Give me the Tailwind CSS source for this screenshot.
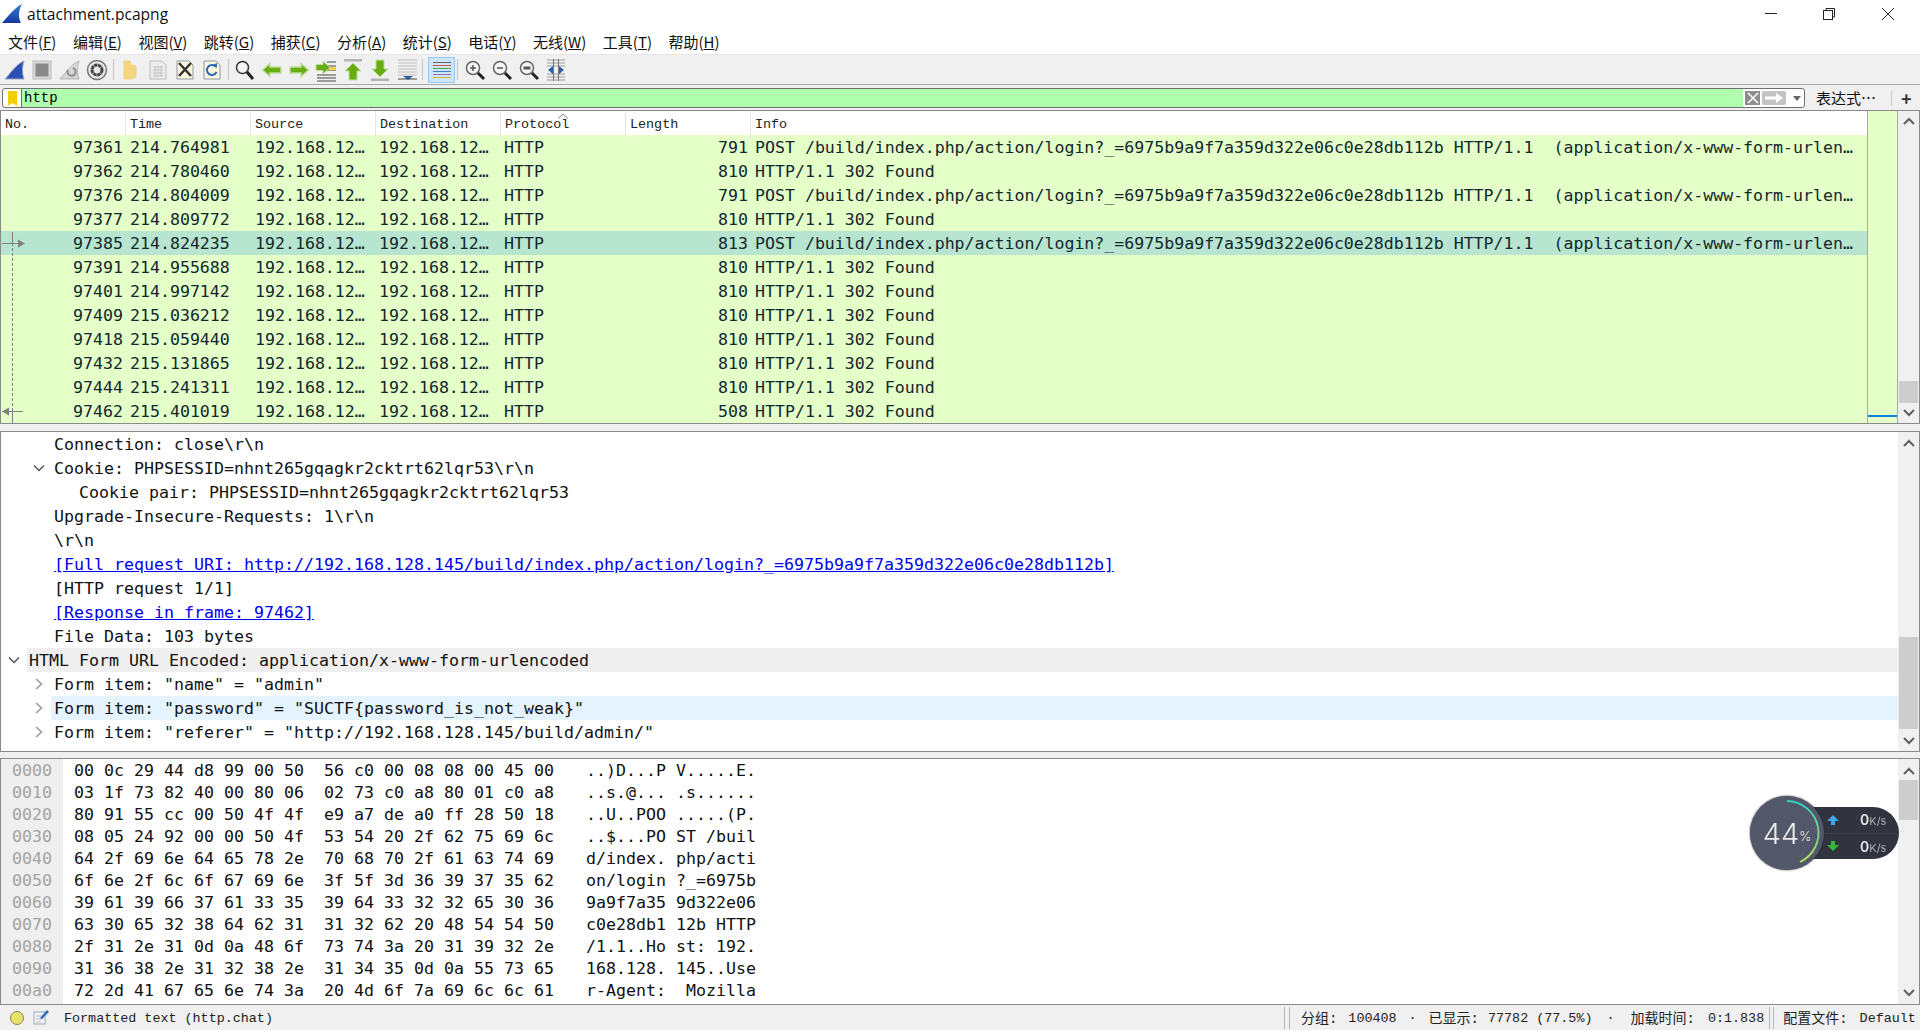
<!doctype html>
<html lang="zh-CN">
<head>
<meta charset="utf-8">
<title>attachment.pcapng</title>
<script src="https://cdn.jsdelivr.net/npm/@tailwindcss/browser@4"></script>
</head>
<body class="relative w-[1920px] h-[1030px] overflow-hidden bg-[#f0f0f0] text-black font-['Noto_Sans_CJK_SC',sans-serif]">

<!-- title bar -->
<header class="h-[28px] bg-white flex items-center relative">
  <svg class="ml-[2px] w-[21px] h-[23px] -mt-[2px]" viewBox="0 0 20 20"><defs><linearGradient id="fin" x1="0" y1="0" x2="0" y2="1"><stop offset="0" stop-color="#2f7fd8"/><stop offset="1" stop-color="#17389e"/></linearGradient></defs><path d="M0 19C5 14 10 6 19 1C16 7 15 13 18 19Z" fill="url(#fin)"/></svg>
  <span class="ml-[4px] mt-[2px] text-[15.600px] font-['Open_Sans',sans-serif] text-[#111]">attachment.pcapng</span>
  <div class="ml-auto flex items-center">
    <svg class="w-[14px] h-[14px] mr-[44px]" viewBox="0 0 14 14"><path d="M1 6.500H13" stroke="#222"/></svg>
    <svg class="w-[14px] h-[14px] mr-[45px]" viewBox="0 0 14 14" fill="none" stroke="#222"><rect x="1.500" y="3.500" width="9" height="9"/><path d="M4 3V1.500H12.500V10H10.500"/></svg>
    <svg class="w-[14px] h-[14px] mr-[25px]" viewBox="0 0 14 14" stroke="#222"><path d="M1 1L13 13M13 1L1 13"/></svg>
  </div>
</header>

<!-- menu -->
<nav class="h-[27px] bg-white border-b border-[#e6e6e6] flex items-center pl-[8px] pt-[2px] gap-[16.500px] text-[15px] text-[#111]">
  <span>文件(<u>F</u>)</span><span>编辑(<u>E</u>)</span><span>视图(<u>V</u>)</span><span>跳转(<u>G</u>)</span><span>捕获(<u>C</u>)</span><span>分析(<u>A</u>)</span><span>统计(<u>S</u>)</span><span>电话(<u>Y</u>)</span><span>无线(<u>W</u>)</span><span>工具(<u>T</u>)</span><span>帮助(<u>H</u>)</span>
</nav>

<!-- toolbar -->
<div class="h-[30px] border-b border-[#a9a9a9] flex items-center pl-[1px]">
  <div class="w-[27px] flex justify-center"><svg class="w-[22px] h-[22px]" viewBox="0 0 22 22"><path d="M1 20C6 15 11 6 20 2C18 8 18 14 20 20Z" fill="#2c4fb4" stroke="#9aa6c4"/></svg></div>
  <div class="w-[28px] flex justify-center"><svg class="w-[22px] h-[22px]" viewBox="0 0 22 22"><rect x="2" y="2" width="18" height="18" fill="#d8d8d8" stroke="#bdbdbd"/><rect x="4.500" y="4.500" width="13" height="13" fill="#8a8a8a"/></svg></div>
  <div class="w-[27px] flex justify-center"><svg class="w-[22px] h-[22px]" viewBox="0 0 22 22"><path d="M1 20C6 15 11 6 20 2C18 8 18 14 20 20Z" fill="#d6d6d6" stroke="#b5b5b5"/><path d="M14 9A4 4 0 1 1 9 11" fill="none" stroke="#8f8f8f" stroke-width="2"/></svg></div>
  <div class="w-[27px] flex justify-center"><svg class="w-[22px] h-[22px]" viewBox="0 0 22 22"><circle cx="11" cy="11" r="9.500" fill="#e8e8e8" stroke="#777" stroke-width="1.500"/><circle cx="11" cy="11" r="5" fill="none" stroke="#444" stroke-width="3" stroke-dasharray="3.500 0.500"/></svg></div>
  <div class="w-[1px] h-[21px] bg-[#c4c4c4] ml-[3px] mr-[2px]"></div>
  <div class="w-[28px] flex justify-center"><svg class="w-[20px] h-[22px]" viewBox="0 0 20 22"><path d="M4 2H10L11 6L16 7V18L11 20H4Z" fill="#f5d67c" stroke="#ecd48a"/></svg></div>
  <div class="w-[27px] flex justify-center"><svg class="w-[22px] h-[22px]" viewBox="0 0 22 22"><path d="M3 2H15L19 6V20H3Z" fill="#ececec" stroke="#bcbcbc"/><path d="M6 8H16M6 11H16M6 14H16M6 17H16M8 7V18M11 7V18M14 7V18" stroke="#c6c6c6"/></svg></div>
  <div class="w-[27px] flex justify-center"><svg class="w-[22px] h-[22px]" viewBox="0 0 22 22"><path d="M3 2H15L19 6V20H3Z" fill="#fbf6dc" stroke="#8c9aa4"/><path d="M5 4L17 17M17 4L5 17" stroke="#333" stroke-width="2.500"/></svg></div>
  <div class="w-[27px] flex justify-center"><svg class="w-[22px] h-[22px]" viewBox="0 0 22 22"><path d="M3 2H15L19 6V20H3Z" fill="#fbf6dc" stroke="#8c9aa4"/><path d="M15 8A5 5 0 1 0 15.500 13" fill="none" stroke="#2a68b8" stroke-width="2"/><path d="M12 6L16 4V9Z" fill="#2a68b8"/></svg></div>
  <div class="w-[1px] h-[21px] bg-[#c4c4c4] ml-[3px] mr-[2px]"></div>
  <div class="w-[27px] flex justify-center"><svg class="w-[22px] h-[22px]" viewBox="0 0 22 22"><circle cx="8.500" cy="8.500" r="6" fill="#f4f4f4" stroke="#333" stroke-width="1.500"/><path d="M13 13L19 20" stroke="#222" stroke-width="3"/></svg></div>
  <div class="w-[27px] flex justify-center"><svg class="w-[22px] h-[20px]" viewBox="0 0 22 20"><path d="M1.500 10L9 3.500V7H20V13H9V16.500Z" fill="#68ad12" stroke="#c2dda0" stroke-width="1.500"/></svg></div>
  <div class="w-[27px] flex justify-center"><svg class="w-[22px] h-[20px]" viewBox="0 0 22 20"><path d="M20.500 10L13 3.500V7H2V13H13V16.500Z" fill="#68ad12" stroke="#c2dda0" stroke-width="1.500"/></svg></div>
  <div class="w-[27px] flex justify-center"><svg class="w-[22px] h-[24px]" viewBox="0 0 22 24"><path d="M12 4H21M12 8H21M12 12H21M2 17H21M2 20H21M2 23H21" stroke="#444"/><path d="M14 9H21V12H14Z" fill="#f2cf4a"/><path d="M15 9.500L8 3V6.500H1V12.500H8V16Z" fill="#68ad12" stroke="#c2dda0"/></svg></div>
  <div class="w-[27px] flex justify-center"><svg class="w-[22px] h-[24px]" viewBox="0 0 22 24"><rect x="2" y="1" width="18" height="2.500" fill="#b4b4b4"/><path d="M11 5L19 13H15V22H7V13H3Z" fill="#68ad12" stroke="#c2dda0"/></svg></div>
  <div class="w-[27px] flex justify-center"><svg class="w-[22px] h-[24px]" viewBox="0 0 22 24"><rect x="2" y="20.500" width="18" height="2.500" fill="#b4b4b4"/><path d="M11 19L19 11H15V2H7V11H3Z" fill="#68ad12" stroke="#c2dda0"/></svg></div>
  <div class="w-[27px] flex justify-center"><svg class="w-[22px] h-[24px]" viewBox="0 0 22 24"><path d="M2 2H21M2 5H21M2 8H21M2 11H21M2 14H21M2 17H21" stroke="#bcbcbc"/><path d="M2 21H21" stroke="#444"/><path d="M7 18H17L12 22Z" fill="#2a5fa8"/></svg></div>
  <div class="w-[1px] h-[21px] bg-[#c4c4c4] ml-[2px] mr-[5px]"></div>
  <div class="w-[27px] h-[26px] flex justify-center items-center bg-[#cce4f7] border border-[#99c9ef]"><svg class="w-[20px] h-[20px]" viewBox="0 0 20 20"><path d="M1 2.500H19" stroke="#666"/><path d="M1 5.500H19" stroke="#d9534f"/><path d="M1 8.500H19" stroke="#4ca64c"/><path d="M1 11.500H19" stroke="#3f7fd0"/><path d="M1 14.500H19" stroke="#a070c0"/><path d="M1 17.500H19" stroke="#d8b02a"/></svg></div>
  <div class="w-[1px] h-[21px] bg-[#c4c4c4] ml-[2px] mr-[3px]"></div>
  <div class="w-[27px] flex justify-center"><svg class="w-[22px] h-[22px]" viewBox="0 0 22 22"><circle cx="9" cy="9" r="6.500" fill="#f4f4f4" stroke="#666" stroke-width="1.500"/><path d="M14 14L20 20" stroke="#222" stroke-width="3"/><path d="M6 9H12M9 6V12" stroke="#555" stroke-width="1.500"/></svg></div>
  <div class="w-[27px] flex justify-center"><svg class="w-[22px] h-[22px]" viewBox="0 0 22 22"><circle cx="9" cy="9" r="6.500" fill="#f4f4f4" stroke="#666" stroke-width="1.500"/><path d="M14 14L20 20" stroke="#222" stroke-width="3"/><path d="M6 9H12" stroke="#555" stroke-width="1.500"/></svg></div>
  <div class="w-[27px] flex justify-center"><svg class="w-[22px] h-[22px]" viewBox="0 0 22 22"><circle cx="9" cy="9" r="6.500" fill="#f4f4f4" stroke="#666" stroke-width="1.500"/><path d="M14 14L20 20" stroke="#222" stroke-width="3"/><path d="M5.500 9H12.500" stroke="#555" stroke-width="3"/></svg></div>
  <div class="w-[27px] flex justify-center"><svg class="w-[22px] h-[24px]" viewBox="0 0 22 24"><path d="M2 2H20M2 5H20M2 8H20M2 16H20M2 19H20M2 22H20" stroke="#9a9a9a"/><path d="M8.500 1V23M13.500 1V23" stroke="#777"/><path d="M3 12L8 8V16ZM19 12L14 8V16Z" fill="#2a5fa8"/></svg></div>
</div>

<!-- display filter -->
<div class="h-[25px] flex items-center pl-[2px] pt-[1px]">
  <div class="w-[1803px] h-[20px] border border-[#707070] rounded-[3px] flex items-center bg-white overflow-hidden">
    <div class="w-[19px] h-full border-r border-[#707070] flex justify-center items-center"><svg class="w-[9px] h-[15px]" viewBox="0 0 9 15"><path d="M0 0H9V15L4.500 12L0 15Z" fill="#f2d000"/></svg></div>
    <div class="w-[1721px] h-full bg-[#afffaf] pl-[2px] flex items-center font-['Liberation_Mono',monospace] text-[14px] leading-none">http</div>
    <div class="w-[15px] h-[14px] ml-[2px] bg-[#8e8e8e] flex items-center justify-center"><svg class="w-[12px] h-[12px]" viewBox="0 0 12 12"><path d="M1 1L11 11M11 1L1 11" stroke="#fff" stroke-width="1.500"/></svg></div>
    <div class="w-[24px] h-[14px] ml-[2px] bg-[#c4c4c4] rounded-[2px] flex items-center justify-center"><svg class="w-[18px] h-[10px]" viewBox="0 0 18 10"><path d="M0 3.500H11V0L18 5L11 10V6.500H0Z" fill="#fff"/></svg></div>
    <svg class="w-[8px] h-[5px] ml-[7px]" viewBox="0 0 8 5"><path d="M0 0H8L4 5Z" fill="#666"/></svg>
  </div>
  <span class="ml-[11px] w-[75px] text-[15px] text-[#111] whitespace-nowrap">表达式…</span>
  <div class="w-[1px] h-[15px] bg-[#c8c8c8]"></div>
  <span class="ml-[9px] text-[18px] font-bold text-[#333] leading-none">+</span>
</div>

<!-- packet list -->
<section class="relative h-[314px] border border-[#8a8a8a] bg-white flex font-['DejaVu_Sans_Mono',monospace] text-[16.580px] leading-[26px] text-[#12272e] [&_span]:whitespace-pre">
  <div class="w-[1866px] overflow-hidden">
    <div class="h-[24px] grid grid-cols-[125px_125px_125px_125px_125px_125px_1fr] font-['Liberation_Mono',monospace] text-[13.400px] leading-[28px] text-[#222]">
      <div class="border-r border-[#e4e4e4] pl-[4px]">No.</div>
      <div class="border-r border-[#e4e4e4] pl-[4px]">Time</div>
      <div class="border-r border-[#e4e4e4] pl-[4px]">Source</div>
      <div class="border-r border-[#e4e4e4] pl-[4px]">Destination</div>
      <div class="border-r border-[#e4e4e4] pl-[4px]">Protocol</div>
      <div class="border-r border-[#e4e4e4] pl-[4px]">Length</div>
      <div class="pl-[4px]">Info</div>
    </div>
    <div>
      <div class="h-[24px] bg-[#e4ffc7] grid grid-cols-[125px_125px_125px_125px_125px_125px_1fr]"><span class="text-right pr-[3px]">97361</span><span class="pl-[4px]">214.764981</span><span class="pl-[4px]">192.168.12…</span><span class="pl-[3px]">192.168.12…</span><span class="pl-[3px]">HTTP</span><span class="text-right pr-[3px]">791</span><span class="pl-[4px]">POST /build/index.php/action/login?_=6975b9a9f7a359d322e06c0e28db112b HTTP/1.1  (application/x-www-form-urlen…</span></div>
      <div class="h-[24px] bg-[#e4ffc7] grid grid-cols-[125px_125px_125px_125px_125px_125px_1fr]"><span class="text-right pr-[3px]">97362</span><span class="pl-[4px]">214.780460</span><span class="pl-[4px]">192.168.12…</span><span class="pl-[3px]">192.168.12…</span><span class="pl-[3px]">HTTP</span><span class="text-right pr-[3px]">810</span><span class="pl-[4px]">HTTP/1.1 302 Found</span></div>
      <div class="h-[24px] bg-[#e4ffc7] grid grid-cols-[125px_125px_125px_125px_125px_125px_1fr]"><span class="text-right pr-[3px]">97376</span><span class="pl-[4px]">214.804009</span><span class="pl-[4px]">192.168.12…</span><span class="pl-[3px]">192.168.12…</span><span class="pl-[3px]">HTTP</span><span class="text-right pr-[3px]">791</span><span class="pl-[4px]">POST /build/index.php/action/login?_=6975b9a9f7a359d322e06c0e28db112b HTTP/1.1  (application/x-www-form-urlen…</span></div>
      <div class="h-[24px] bg-[#e4ffc7] grid grid-cols-[125px_125px_125px_125px_125px_125px_1fr]"><span class="text-right pr-[3px]">97377</span><span class="pl-[4px]">214.809772</span><span class="pl-[4px]">192.168.12…</span><span class="pl-[3px]">192.168.12…</span><span class="pl-[3px]">HTTP</span><span class="text-right pr-[3px]">810</span><span class="pl-[4px]">HTTP/1.1 302 Found</span></div>
      <div class="h-[24px] bg-[#b7e5d0] grid grid-cols-[125px_125px_125px_125px_125px_125px_1fr]"><span class="text-right pr-[3px]">97385</span><span class="pl-[4px]">214.824235</span><span class="pl-[4px]">192.168.12…</span><span class="pl-[3px]">192.168.12…</span><span class="pl-[3px]">HTTP</span><span class="text-right pr-[3px]">813</span><span class="pl-[4px]">POST /build/index.php/action/login?_=6975b9a9f7a359d322e06c0e28db112b HTTP/1.1  (application/x-www-form-urlen…</span></div>
      <div class="h-[24px] bg-[#e4ffc7] grid grid-cols-[125px_125px_125px_125px_125px_125px_1fr]"><span class="text-right pr-[3px]">97391</span><span class="pl-[4px]">214.955688</span><span class="pl-[4px]">192.168.12…</span><span class="pl-[3px]">192.168.12…</span><span class="pl-[3px]">HTTP</span><span class="text-right pr-[3px]">810</span><span class="pl-[4px]">HTTP/1.1 302 Found</span></div>
      <div class="h-[24px] bg-[#e4ffc7] grid grid-cols-[125px_125px_125px_125px_125px_125px_1fr]"><span class="text-right pr-[3px]">97401</span><span class="pl-[4px]">214.997142</span><span class="pl-[4px]">192.168.12…</span><span class="pl-[3px]">192.168.12…</span><span class="pl-[3px]">HTTP</span><span class="text-right pr-[3px]">810</span><span class="pl-[4px]">HTTP/1.1 302 Found</span></div>
      <div class="h-[24px] bg-[#e4ffc7] grid grid-cols-[125px_125px_125px_125px_125px_125px_1fr]"><span class="text-right pr-[3px]">97409</span><span class="pl-[4px]">215.036212</span><span class="pl-[4px]">192.168.12…</span><span class="pl-[3px]">192.168.12…</span><span class="pl-[3px]">HTTP</span><span class="text-right pr-[3px]">810</span><span class="pl-[4px]">HTTP/1.1 302 Found</span></div>
      <div class="h-[24px] bg-[#e4ffc7] grid grid-cols-[125px_125px_125px_125px_125px_125px_1fr]"><span class="text-right pr-[3px]">97418</span><span class="pl-[4px]">215.059440</span><span class="pl-[4px]">192.168.12…</span><span class="pl-[3px]">192.168.12…</span><span class="pl-[3px]">HTTP</span><span class="text-right pr-[3px]">810</span><span class="pl-[4px]">HTTP/1.1 302 Found</span></div>
      <div class="h-[24px] bg-[#e4ffc7] grid grid-cols-[125px_125px_125px_125px_125px_125px_1fr]"><span class="text-right pr-[3px]">97432</span><span class="pl-[4px]">215.131865</span><span class="pl-[4px]">192.168.12…</span><span class="pl-[3px]">192.168.12…</span><span class="pl-[3px]">HTTP</span><span class="text-right pr-[3px]">810</span><span class="pl-[4px]">HTTP/1.1 302 Found</span></div>
      <div class="h-[24px] bg-[#e4ffc7] grid grid-cols-[125px_125px_125px_125px_125px_125px_1fr]"><span class="text-right pr-[3px]">97444</span><span class="pl-[4px]">215.241311</span><span class="pl-[4px]">192.168.12…</span><span class="pl-[3px]">192.168.12…</span><span class="pl-[3px]">HTTP</span><span class="text-right pr-[3px]">810</span><span class="pl-[4px]">HTTP/1.1 302 Found</span></div>
      <div class="h-[24px] bg-[#e4ffc7] grid grid-cols-[125px_125px_125px_125px_125px_125px_1fr]"><span class="text-right pr-[3px]">97462</span><span class="pl-[4px]">215.401019</span><span class="pl-[4px]">192.168.12…</span><span class="pl-[3px]">192.168.12…</span><span class="pl-[3px]">HTTP</span><span class="text-right pr-[3px]">508</span><span class="pl-[4px]">HTTP/1.1 302 Found</span></div>
    </div>
  </div>
  <!-- minimap -->
  <div class="w-[31px] border-x border-[#a9a9a9] bg-[#e4ffc7] flex flex-col justify-end">
    <div class="h-[2px] bg-[#0a84e0] mb-[6px]"></div>
  </div>
  <div class="flex-1 bg-[#f0f0f0] flex flex-col items-center pt-[3px]">
    <svg class="w-[12px] h-[14px]" viewBox="0 0 12 14"><path d="M1 10L6 5L11 10" fill="none" stroke="#606060" stroke-width="2"/></svg>
    <div class="w-[19px] h-[22px] bg-[#cdcdcd] mt-[253px]"></div>
    <svg class="w-[12px] h-[14px] mt-[3px]" viewBox="0 0 12 14"><path d="M1 4L6 9L11 4" fill="none" stroke="#606060" stroke-width="2"/></svg>
  </div>
  <!-- related packet marks over the No. column -->
  <svg class="absolute left-0 top-0 w-[32px] h-[312px] pointer-events-none" viewBox="0 0 32 312" fill="#808080" stroke="#808080">
    <path d="M11.500 121V132" fill="none"/>
    <path d="M1 132.500H18M1 300.500H22" fill="none"/>
    <path d="M17 128.500L24 132.500L17 136.500Z" stroke="none"/>
    <path d="M1 300.500L8 296.500V304.500Z" stroke="none"/>
    <path d="M11.500 132V300" fill="none" stroke-dasharray="3 2"/>
    <path d="M11.500 300V312" fill="none"/>
  </svg>
  <svg class="absolute left-[556px] top-[2px] w-[12px] h-[6px]" viewBox="0 0 12 6"><path d="M1 5.500L6 1L11 5.500" fill="none" stroke="#888"/></svg>
</section>

<div class="h-[7px]"></div>

<!-- packet details -->
<section class="h-[321px] border border-[#8a8a8a] bg-white flex font-['DejaVu_Sans_Mono',monospace] text-[16.620px] leading-[26px] text-[#111]">
  <div class="w-[1897px] [&_div]:whitespace-pre">
    <div class="h-[24px] pl-[53px]">Connection: close\r\n</div>
    <div class="h-[24px] pl-[32px] flex items-center"><svg class="w-[12px] h-[12px] mr-[9px]" viewBox="0 0 12 12"><path d="M1 3.500L6 8.500L11 3.500" fill="none" stroke="#555" stroke-width="1.500"/></svg><span class="translate-y-px">Cookie: PHPSESSID=nhnt265gqagkr2cktrt62lqr53\r\n</span></div>
    <div class="h-[24px] pl-[78px]">Cookie pair: PHPSESSID=nhnt265gqagkr2cktrt62lqr53</div>
    <div class="h-[24px] pl-[53px]">Upgrade-Insecure-Requests: 1\r\n</div>
    <div class="h-[24px] pl-[53px]">\r\n</div>
    <div class="h-[24px] pl-[53px] text-[#0000ee] underline">[Full request URI: http://192.168.128.145/build/index.php/action/login?_=6975b9a9f7a359d322e06c0e28db112b]</div>
    <div class="h-[24px] pl-[53px]">[HTTP request 1/1]</div>
    <div class="h-[24px] pl-[53px] text-[#0000ee] underline">[Response in frame: 97462]</div>
    <div class="h-[24px] pl-[53px]">File Data: 103 bytes</div>
    <div class="h-[24px] flex items-center pl-[7px]"><svg class="w-[12px] h-[12px] mr-[7px]" viewBox="0 0 12 12"><path d="M1 3.500L6 8.500L11 3.500" fill="none" stroke="#555" stroke-width="1.500"/></svg><div class="flex-1 bg-[#efefef] pl-[2px] h-[24px]">HTML Form URL Encoded: application/x-www-form-urlencoded</div></div>
    <div class="h-[24px] pl-[33px] flex items-center"><svg class="w-[10px] h-[12px] mr-[10px]" viewBox="0 0 10 12"><path d="M2 1L7.500 6L2 11" fill="none" stroke="#999" stroke-width="1.500"/></svg><span class="translate-y-px">Form item: "name" = "admin"</span></div>
    <div class="h-[24px] pl-[33px] flex items-center"><svg class="w-[10px] h-[12px] mr-[7px]" viewBox="0 0 10 12"><path d="M2 1L7.500 6L2 11" fill="none" stroke="#999" stroke-width="1.500"/></svg><div class="flex-1 bg-[#e5f3ff] pl-[3px] h-[24px]">Form item: "password" = "SUCTF{password_is_not_weak}"</div></div>
    <div class="h-[24px] pl-[33px] flex items-center"><svg class="w-[10px] h-[12px] mr-[10px]" viewBox="0 0 10 12"><path d="M2 1L7.500 6L2 11" fill="none" stroke="#999" stroke-width="1.500"/></svg><span class="translate-y-px">Form item: "referer" = "http://192.168.128.145/build/admin/"</span></div>
  </div>
  <div class="flex-1 bg-[#f0f0f0] flex flex-col items-center pt-[4px]">
    <svg class="w-[12px] h-[14px]" viewBox="0 0 12 14"><path d="M1 10L6 5L11 10" fill="none" stroke="#606060" stroke-width="2"/></svg>
    <div class="w-[19px] h-[92px] bg-[#cdcdcd] mt-[187px]"></div>
    <svg class="w-[12px] h-[14px] mt-[5px]" viewBox="0 0 12 14"><path d="M1 4L6 9L11 4" fill="none" stroke="#606060" stroke-width="2"/></svg>
  </div>
</section>

<div class="h-[6px]"></div>

<!-- packet bytes -->
<section class="h-[247px] border border-[#8a8a8a] bg-white flex font-['DejaVu_Sans_Mono',monospace] text-[16.620px] leading-[22px] text-[#111]">
  <div class="w-[62px] bg-[#efefef] text-[#a3a3a3] pl-[11px] pt-px">
    <div>0000</div><div>0010</div><div>0020</div><div>0030</div><div>0040</div><div>0050</div><div>0060</div><div>0070</div><div>0080</div><div>0090</div><div>00a0</div>
  </div>
  <div class="w-[512px] pl-[11px] pt-px [&_div]:whitespace-pre">
    <div>00 0c 29 44 d8 99 00 50  56 c0 00 08 08 00 45 00</div>
    <div>03 1f 73 82 40 00 80 06  02 73 c0 a8 80 01 c0 a8</div>
    <div>80 91 55 cc 00 50 4f 4f  e9 a7 de a0 ff 28 50 18</div>
    <div>08 05 24 92 00 00 50 4f  53 54 20 2f 62 75 69 6c</div>
    <div>64 2f 69 6e 64 65 78 2e  70 68 70 2f 61 63 74 69</div>
    <div>6f 6e 2f 6c 6f 67 69 6e  3f 5f 3d 36 39 37 35 62</div>
    <div>39 61 39 66 37 61 33 35  39 64 33 32 32 65 30 36</div>
    <div>63 30 65 32 38 64 62 31  31 32 62 20 48 54 54 50</div>
    <div>2f 31 2e 31 0d 0a 48 6f  73 74 3a 20 31 39 32 2e</div>
    <div>31 36 38 2e 31 32 38 2e  31 34 35 0d 0a 55 73 65</div>
    <div>72 2d 41 67 65 6e 74 3a  20 4d 6f 7a 69 6c 6c 61</div>
  </div>
  <div class="w-[1323px] pl-[11px] pt-px [&_div]:whitespace-pre">
    <div>..)D...P V.....E.</div>
    <div>..s.@... .s......</div>
    <div>..U..POO .....(P.</div>
    <div>..$...PO ST /buil</div>
    <div>d/index. php/acti</div>
    <div>on/login ?_=6975b</div>
    <div>9a9f7a35 9d322e06</div>
    <div>c0e28db1 12b HTTP</div>
    <div>/1.1..Ho st: 192.</div>
    <div>168.128. 145..Use</div>
    <div>r-Agent:  Mozilla</div>
  </div>
  <div class="flex-1 bg-[#f0f0f0] flex flex-col items-center pt-[5px]">
    <svg class="w-[12px] h-[14px]" viewBox="0 0 12 14"><path d="M1 10L6 5L11 10" fill="none" stroke="#606060" stroke-width="2"/></svg>
    <div class="w-[19px] h-[40px] bg-[#cdcdcd] mt-[2px]"></div>
    <svg class="w-[12px] h-[14px] mt-[166px]" viewBox="0 0 12 14"><path d="M1 4L6 9L11 4" fill="none" stroke="#606060" stroke-width="2"/></svg>
  </div>
</section>

<!-- status bar -->
<footer class="h-[26px] flex items-center pt-[2px] font-['Liberation_Mono','Noto_Sans_CJK_SC',monospace] text-[13.400px] text-[#222] whitespace-pre">
  <div class="ml-[10px] w-[14px] h-[14px] rounded-full bg-[#e6e26a] border border-[#8a8a50] -mt-[2px]"></div>
  <svg class="ml-[9px] w-[16px] h-[16px] -mt-[4px]" viewBox="0 0 16 16"><rect x="1" y="3" width="11" height="12" fill="#f4f4f4" stroke="#9aa6b4"/><path d="M3 7H10M3 10H10M3 13H8" stroke="#b5bcc4"/><path d="M7 9L14 1L16 3L9 10Z" fill="#2a6eb8"/></svg>
  <span class="ml-[15px]">Formatted text (http.chat)</span>
  <div class="ml-[1011px] w-[6px] h-[22px] border-x border-[#b4b4b4] -mt-[2px]"></div>
  <span class="ml-[11px] text-[14px]">分组:</span><span class="ml-[11px]">100408</span><span class="ml-[12px]">·</span>
  <span class="ml-[12px] text-[14px]">已显示:</span><span class="ml-[9px]">77782 (77.5%)</span><span class="ml-[14px]">·</span>
  <span class="ml-[16px] text-[14px]">加载时间:</span><span class="ml-[13px]">0:1.838</span>
  <div class="ml-[5px] w-[5px] h-[22px] border-x border-[#b4b4b4] -mt-[2px]"></div>
  <span class="ml-[9px] text-[14px]">配置文件:</span><span class="ml-[12px]">Default</span>
</footer>

<!-- floating network meter -->
<div class="absolute left-[1750px] top-[796px] w-[150px] h-[74px] blur-[0.4px]">
  <div class="absolute left-[30px] top-[11px] w-[119px] h-[52px] rounded-full bg-[#31343f]">
    <div class="absolute left-[38px] right-0 top-[26px] h-px bg-[#3d404c]"></div>
    <svg class="absolute left-[47px] top-[8px] w-[12px] h-[10px]" viewBox="0 0 12 10"><path d="M6 0L12 6H8V10H4V6H0Z" fill="#3fa9e8"/></svg>
    <svg class="absolute left-[47px] top-[34px] w-[12px] h-[10px]" viewBox="0 0 12 10"><path d="M6 10L12 4H8V0H4V4H0Z" fill="#35b33a"/></svg>
    <span class="absolute left-[80px] top-[2px] text-[#e8e8e8] text-[14px] font-semibold leading-[22px] font-['Inter',sans-serif]">0<span class="text-[11px] font-normal text-[#a8abb4]">K/s</span></span>
    <span class="absolute left-[80px] top-[29px] text-[#e8e8e8] text-[14px] font-semibold leading-[22px] font-['Inter',sans-serif]">0<span class="text-[11px] font-normal text-[#a8abb4]">K/s</span></span>
  </div>
  <div class="absolute left-0 top-0 w-[74px] h-[74px] rounded-full bg-[#53576a] shadow-[0_0_2px_#222] flex items-center justify-center text-[#ececec] font-['Inter',sans-serif] font-light">
    <span class="text-[29px] leading-none">44</span><span class="text-[13px] mt-[8px]">%</span>
  </div>
  <svg class="absolute left-0 top-0 w-[74px] h-[74px]" viewBox="0 0 74 74" fill="none"><defs><linearGradient id="arc" x1="0" y1="0" x2="0" y2="1"><stop offset="0" stop-color="#2fd0c0"/><stop offset="1" stop-color="#b5e05a"/></linearGradient></defs><path d="M37 5A32 32 0 0 1 50 66" stroke="url(#arc)" stroke-width="1.800"/></svg>
</div>

</body>
</html>
